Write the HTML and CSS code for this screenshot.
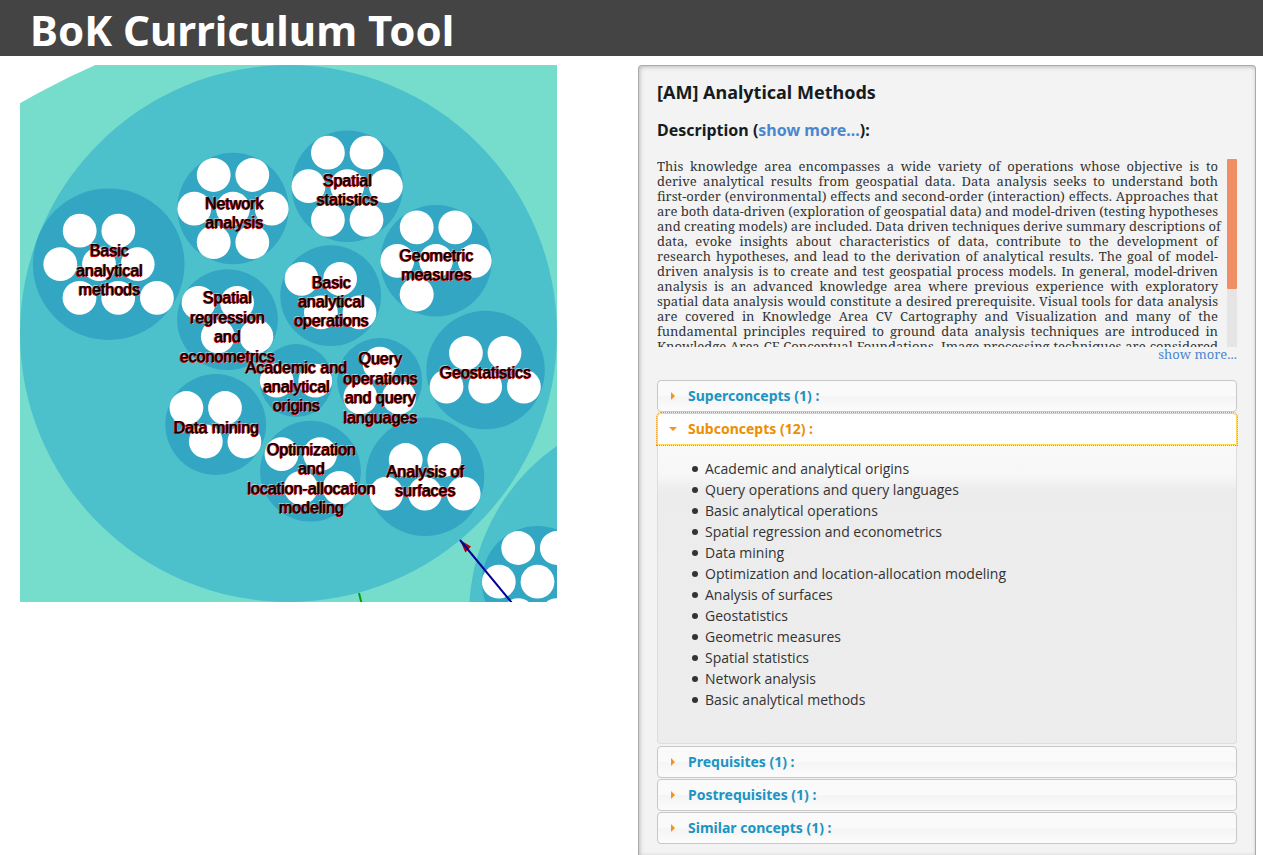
FILE: index.html
```html
<!DOCTYPE html>
<html lang="en">
<head>
<meta charset="utf-8">
<title>BoK Curriculum Tool</title>
<link rel="stylesheet" href="styles.css">
</head>
<body>
<header class="banner"><h1 class="banner-title">BoK Curriculum Tool</h1></header>
<main class="layout">
  <section class="map-column" aria-label="Concept map">
    <svg class="map" viewBox="20 65 537 537" role="img" aria-label="Circle packing of Analytical Methods">
      <defs>
        <g id="c"><circle r="17"/></g>
        <g id="row2"><circle cx="-19.3" r="16.9"/><circle cx="19.3" r="16.9"/></g>
        <g id="row3"><circle cx="-38.7" r="16.9"/><circle r="16.9"/><circle cx="38.7" r="16.9"/></g>
      </defs>
      <circle class="root" cx="405" cy="770" r="770"/>
      <circle class="area" cx="288.5" cy="333.5" r="268.5"/>
      <circle class="area" cx="675" cy="614.5" r="206"/>
      <g class="unit">
        <circle cx="108.7" cy="264.2" r="75.8"/>
        <circle cx="233" cy="208.5" r="55.7"/>
        <circle cx="347.3" cy="186.2" r="55.7"/>
        <circle cx="436" cy="260.8" r="55.7"/>
        <circle cx="330.7" cy="295.7" r="50.4"/>
        <circle cx="227.5" cy="319.7" r="50.4"/>
        <circle cx="215.7" cy="424.5" r="50.4"/>
        <circle cx="310.5" cy="471.2" r="50.4"/>
        <circle cx="296" cy="380.6" r="36.5"/>
        <circle cx="379.7" cy="380.4" r="42.5"/>
        <circle cx="485.6" cy="370" r="59.2"/>
        <circle cx="425" cy="476.8" r="59.2"/>
        <circle cx="537.5" cy="581.7" r="55.7"/>
      </g>
      <g class="topic">
        <use href="#row2" x="99" y="230.7"/><use href="#row3" x="99" y="264.2"/><use href="#row3" x="118.2" y="297.8"/>
        <use href="#row2" x="233" y="175"/><use href="#row3" x="233" y="208.7"/><use href="#row2" x="233" y="242.2"/>
        <use href="#row2" x="347.2" y="152.7"/><use href="#row3" x="347.2" y="186.2"/><use href="#row2" x="347.2" y="219.8"/>
        <use href="#row2" x="436" y="227.3"/><use href="#row3" x="436" y="260.8"/><use href="#c" x="416.7" y="294.4"/>
        <use href="#row2" x="320.8" y="278.8"/><use href="#row2" x="340.2" y="312.4"/>
        <use href="#row2" x="217.8" y="302.8"/><use href="#row2" x="237.1" y="336.4"/>
        <use href="#row2" x="205.7" y="408"/><use href="#row2" x="225.1" y="441.5"/>
        <use href="#row2" x="300.8" y="454.2"/><use href="#row2" x="320.2" y="487.8"/>
        <use href="#row2" x="296" y="380.6"/>
        <use href="#c" x="379.7" y="363.7"/><use href="#row2" x="379.7" y="397.3"/>
        <use href="#row2" x="485.2" y="353"/><use href="#row3" x="485.2" y="386.6"/>
        <use href="#row2" x="425" y="460"/><use href="#row3" x="425" y="493.6"/>
        <use href="#row2" x="537.5" y="548"/><use href="#row3" x="537.5" y="581.7"/><use href="#row2" x="537.5" y="615.2"/>
      </g>
      <path class="arrow-head" d="M460 540 471 546.5 465.3 552.5Z"/>
      <path class="link-in" d="M460 540 512 603"/>
      <path class="link-out" d="M359 593 361.5 603"/>
      <g class="labels">
        <text><tspan x="109" y="256">Basic</tspan><tspan x="109" y="276">analytical</tspan><tspan x="109" y="295">methods</tspan></text>
        <text><tspan x="234" y="209">Network</tspan><tspan x="234" y="228">analysis</tspan></text>
        <text><tspan x="347" y="186">Spatial</tspan><tspan x="347" y="205">statistics</tspan></text>
        <text><tspan x="436" y="261">Geometric</tspan><tspan x="436" y="280">measures</tspan></text>
        <text><tspan x="331" y="288">Basic</tspan><tspan x="331" y="307">analytical</tspan><tspan x="331" y="326">operations</tspan></text>
        <text><tspan x="227" y="303">Spatial</tspan><tspan x="227" y="323">regression</tspan><tspan x="227" y="342">and</tspan><tspan x="227" y="362">econometrics</tspan></text>
        <text><tspan x="296" y="373">Academic and</tspan><tspan x="296" y="392">analytical</tspan><tspan x="296" y="411">origins</tspan></text>
        <text><tspan x="380" y="364">Query</tspan><tspan x="380" y="384">operations</tspan><tspan x="380" y="403">and query</tspan><tspan x="380" y="423">languages</tspan></text>
        <text x="485" y="378">Geostatistics</text>
        <text x="216" y="433">Data mining</text>
        <text><tspan x="311" y="455">Optimization</tspan><tspan x="311" y="474">and</tspan><tspan x="311" y="494">location-allocation</tspan><tspan x="311" y="513">modeling</tspan></text>
        <text><tspan x="425" y="477">Analysis of</tspan><tspan x="425" y="496">surfaces</tspan></text>
      </g>
    </svg>
  </section>
  <section class="panel">
    <h2 class="concept">[AM] Analytical Methods</h2>
    <h3 class="subhead">Description (<a class="link" href="#more">show more...</a>):</h3>
    <div class="description">
      <p class="description-text">This knowledge area encompasses a wide variety of operations whose objective is to<br>derive analytical results from geospatial data. Data analysis seeks to understand both<br>first-order (environmental) effects and second-order (interaction) effects. Approaches that<br>are both data-driven (exploration of geospatial data) and model-driven (testing hypotheses<br>and creating models) are included. Data driven techniques derive summary descriptions of<br>data, evoke insights about characteristics of data, contribute to the development of<br>research hypotheses, and lead to the derivation of analytical results. The goal of model-<br>driven analysis is to create and test geospatial process models. In general, model-driven<br>analysis is an advanced knowledge area where previous experience with exploratory<br>spatial data analysis would constitute a desired prerequisite. Visual tools for data analysis<br>are covered in Knowledge Area CV Cartography and Visualization and many of the<br>fundamental principles required to ground data analysis techniques are introduced in<br>Knowledge Area CF Conceptual Foundations. Image processing techniques are considered</p>
      <div class="track"><div class="thumb"></div></div>
    </div>
    <p class="more"><a class="link" href="#more" id="more">show more...</a></p>
    <div class="accordion">
      <h3 class="item"><button class="toggle" type="button" aria-expanded="false"><svg class="caret" viewBox="0 0 16 16"><path d="M6 4 10 8 6 12Z"/></svg>Superconcepts (1) :</button></h3>
      <h3 class="item"><button class="toggle open" type="button" aria-expanded="true"><svg class="caret" viewBox="0 0 16 16"><path d="M4 6H12L8 10Z"/></svg>Subconcepts (12) :</button></h3>
      <div class="content">
        <ul class="concepts">
          <li>Academic and analytical origins</li>
          <li>Query operations and query languages</li>
          <li>Basic analytical operations</li>
          <li>Spatial regression and econometrics</li>
          <li>Data mining</li>
          <li>Optimization and location-allocation modeling</li>
          <li>Analysis of surfaces</li>
          <li>Geostatistics</li>
          <li>Geometric measures</li>
          <li>Spatial statistics</li>
          <li>Network analysis</li>
          <li>Basic analytical methods</li>
        </ul>
      </div>
      <h3 class="item"><button class="toggle" type="button" aria-expanded="false"><svg class="caret" viewBox="0 0 16 16"><path d="M6 4 10 8 6 12Z"/></svg>Prequisites (1) :</button></h3>
      <h3 class="item"><button class="toggle" type="button" aria-expanded="false"><svg class="caret" viewBox="0 0 16 16"><path d="M6 4 10 8 6 12Z"/></svg>Postrequisites (1) :</button></h3>
      <h3 class="item"><button class="toggle" type="button" aria-expanded="false"><svg class="caret" viewBox="0 0 16 16"><path d="M6 4 10 8 6 12Z"/></svg>Similar concepts (1) :</button></h3>
    </div>
  </section>
</main>
</body>
</html>
```
FILE: styles.css
```css
* { box-sizing: border-box; }
body {
  margin: 0;
  background: #fff;
  color: #333;
  font-family: "Noto Sans", "Open Sans", sans-serif;
}
h1, h2, h3, p, ul { margin: 0; padding: 0; }

.banner {
  background: #444;
  padding: 0 30px;
}
.banner-title {
  color: #fff;
  font: bold 42px/56px "Noto Sans", sans-serif;
  padding-top: 2px;
  height: 56px;
}

.layout {
  display: grid;
  grid-template-columns: minmax(0, 1fr) minmax(0, 1fr);
  padding: 9px 7px 0 20px;
}
.map { display: block; width: 100%; max-width: 537px; }
.root { fill: #76ddcd; }
.area { fill: #4dc1cb; }
.unit { fill: #33a6c3; }
.topic { fill: #fff; }
.arrow-head { fill: #b00000; }
.link-in { stroke: #00009c; stroke-width: 2; }
.link-out { stroke: #00a000; stroke-width: 2; }
.labels {
  font: 16px "Liberation Sans", Arial, sans-serif;
  text-anchor: middle;
  fill: #000;
  text-shadow: 1px 0 0 #900000, 0 1px 0 #c00000, -1px 0 0 rgba(224, 0, 0, .4), -1px -1px 0 rgba(255, 255, 255, .5), 1px 1px 0 rgba(255, 255, 255, .4);
}

.panel {
  min-height: 790px;
  padding: 14px 18px 10px;
  border: 1px solid #aaa;
  border-bottom: 0;
  border-radius: 4px 4px 0 0;
  background: #f3f3f3;
  box-shadow: inset 1px 1px 4px #bbb;
}
.concept { color: #151c20; font-size: 18px; line-height: 24px; }
.subhead { margin-top: 14px; color: #151c20; font-size: 16px; line-height: 24px; }
.link { color: #4c86ce; text-decoration: none; }

.description {
  display: flex;
  height: 188px;
  margin-top: 17px;
  overflow: hidden;
}
.description-text {
  flex: 1;
  min-width: 0;
  font: 13px/15px "Droid Serif", "Noto Serif", "DejaVu Serif", serif;
  text-align: justify;
  text-align-last: justify;
  white-space: nowrap;
}
.track { width: 10px; margin-left: 9px; background: #e5e5e5; }
.thumb { height: 130px; border-radius: 1px; background: #f08e66; }
.more {
  font: 13px/15px "Droid Serif", "Noto Serif", "DejaVu Serif", serif;
  text-align: right;
}

.accordion { margin-top: 18px; }
.item + .item { margin-top: 1px; }
.content + .item { margin-top: 2px; }
.item { line-height: 0; }
.toggle {
  display: flex;
  align-items: center;
  width: 100%;
  height: 32px;
  padding: 0 7px;
  border: 1px solid #c8c8c8;
  border-radius: 4px;
  background: linear-gradient(#fafafa 50%, #f4f4f4 50%, #fcfcfc);
  color: #1c94c4;
  font: bold 14px/20px "Noto Sans", sans-serif;
}
.toggle.open {
  border: 1px solid #fbd850;
  border-radius: 4px 4px 0 0;
  outline: 1px dotted #eb8f00;
  background: #fff;
  color: #eb8f00;
}
.caret { width: 16px; height: 16px; margin-right: 7px; fill: #f6931f; }
.content {
  padding: 13px 34px 33px;
  border: 1px solid #ddd;
  border-top: 0;
  border-radius: 0 0 4px 4px;
  background: linear-gradient(#f9f9f9 0, #f7f7f7 30px, #ececec 46px, #ededed);
}
.concepts {
  font: 14px/21px "Open Sans", sans-serif;
  list-style: none;
}
.concepts li {
  display: flex;
  align-items: center;
  gap: 7px;
}
.concepts li::before {
  content: "";
  width: 6px;
  height: 6px;
  border-radius: 50%;
  background: #333;
}
```
